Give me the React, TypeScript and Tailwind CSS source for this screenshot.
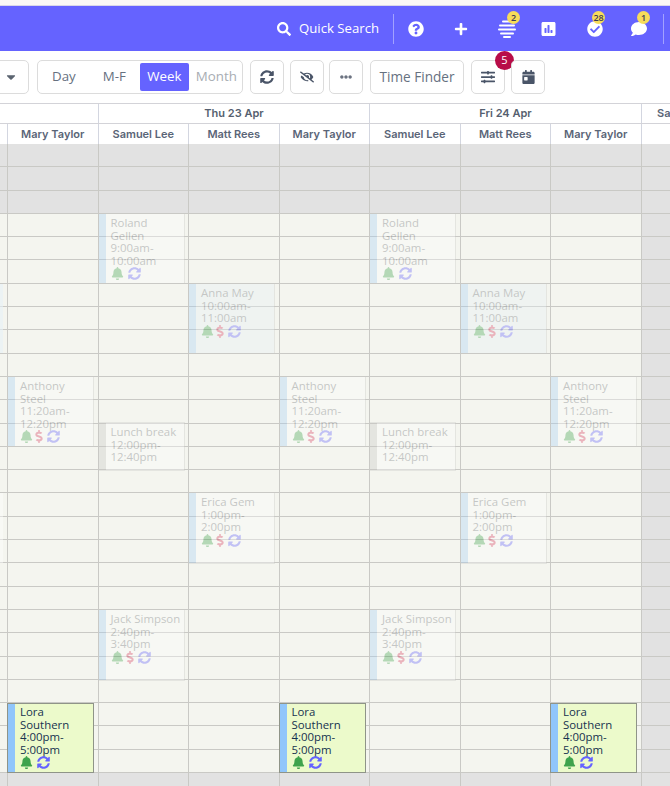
import { FaBell, FaCalendarDay, FaCaretDown, FaCheckCircle, FaComment, FaDollarSign, FaEllipsisH, FaEyeSlash, FaPlus, FaPoll, FaQuestionCircle, FaSearch, FaSlidersH, FaSyncAlt } from "react-icons/fa";

type Ev = {
  name: string[];
  time: string[];
  top: number;
  height: number;
  dollar?: boolean;
  bar?: string;
  tint?: string;
  noIcons?: boolean;
  active?: boolean;
};

const roland: Ev = { name: ["Roland", "Gellen"], time: ["9:00am-", "10:00am"], top: 70, height: 69 };
const anna: Ev = { name: ["Anna May"], time: ["10:00am-", "11:00am"], top: 140, height: 69, dollar: true, tint: "bg-[#e6f1f7]" };
const anthony: Ev = { name: ["Anthony", "Steel"], time: ["11:20am-", "12:20pm"], top: 233, height: 69, dollar: true };
const lunch: Ev = { name: ["Lunch break"], time: ["12:00pm-", "12:40pm"], top: 279, height: 47, noIcons: true, bar: "bg-[#c9cac6]" };
const erica: Ev = { name: ["Erica Gem"], time: ["1:00pm-", "2:00pm"], top: 349, height: 70, dollar: true };
const jack: Ev = { name: ["Jack Simpson"], time: ["2:40pm-", "3:40pm"], top: 466, height: 70, dollar: true };
const lora: Ev = { name: ["Lora", "Southern"], time: ["4:00pm-", "5:00pm"], top: 559, height: 70, active: true };

const columns = [
  { name: "Mary Taylor", events: [anthony, lora] },
  { name: "Samuel Lee", events: [roland, lunch, jack] },
  { name: "Matt Rees", events: [anna, erica] },
  { name: "Mary Taylor", events: [anthony, lora] },
  { name: "Samuel Lee", events: [roland, lunch, jack] },
  { name: "Matt Rees", events: [anna, erica] },
  { name: "Mary Taylor", events: [anthony, lora] },
];

const rows = Array.from({ length: 28 }, (_, i) => i);

function Rows({ closed }: { closed?: boolean }) {
  return (
    <>
      {rows.map((i) => (
        <div
          key={i}
          className={`h-[23.3px] border-b border-[#c9c9c5] ${closed || i < 3 || i > 26 ? "bg-[#e2e2e2]" : "bg-[#f4f5ef]"}`}
        />
      ))}
    </>
  );
}

function EventCard({ ev }: { ev: Ev }) {
  return (
    <div
      className={`absolute flex overflow-hidden text-[11.4px] leading-[12.6px] ${
        ev.active
          ? "left-[-1px] w-[87px] border border-[#8f9488] bg-[#ecfacb] text-[#16324f]"
          : `left-0 w-[85px] opacity-35 ${ev.tint ?? "bg-white"} text-[#6e7278] shadow-[0_0_0_1px_#c9cac6]`
      }`}
      style={{ top: ev.top, height: ev.height }}
    >
      <div className={`w-[7px] shrink-0 ${ev.bar ?? (ev.active ? "bg-[#90c6fb]" : "bg-[#a9d1f5]")}`} />
      <div className={`pl-[5px] ${ev.active ? "pt-[2px]" : "pt-[3px]"}`}>
        {[...ev.name, ...ev.time].map((line, i) => (
          <div key={i} className="whitespace-nowrap">{line}</div>
        ))}
        {!ev.noIcons && (
          <div className="flex items-center gap-[2px]">
            <FaBell className="h-[13px] w-[13px] text-[#3fa34d]" />
            {ev.dollar && <FaDollarSign className="h-[13px] w-[8px] text-[#d93a5e]" />}
            <FaSyncAlt className="ml-0.5 h-[13px] w-[13px] text-[#6563ff]" />
          </div>
        )}
      </div>
    </div>
  );
}

function ToolButton({ children, width = "w-[34px]" }: { children: React.ReactNode; width?: string }) {
  return (
    <div className={`relative flex h-[34px] items-center justify-center rounded-[5px] border border-[#dcdcdc] bg-white text-[#4a5568] ${width}`}>
      {children}
    </div>
  );
}

function Badge({ children, className }: { children: React.ReactNode; className: string }) {
  return (
    <span className={`absolute flex h-[13px] min-w-[13px] items-center justify-center rounded-full bg-[#f7dc5b] text-[9px] font-semibold text-[#3b3b55] ${className}`}>
      {children}
    </span>
  );
}

export default function App() {
  return (
    <div className="h-[786px] w-[670px] overflow-hidden bg-white font-['Open_Sans',sans-serif]">
      <div className="h-[6px] border-b border-[#d9d8e8] bg-[#faf9f6]" />

      <header className="flex h-[45px] items-center justify-end bg-[#6563ff] pl-[277px] text-white">
        <FaSearch className="h-[14px] w-[14px]" />
        <span className="ml-2 text-[13.2px]">Quick Search</span>
        <div className="ml-[14px] h-[30px] w-px bg-white/40" />
        <div className="relative flex-1 self-stretch">
          <FaQuestionCircle className="absolute left-[14px] top-[15px] h-[16px] w-[16px]" />
          <FaPlus className="absolute left-[60px] top-[16px] h-[14px] w-[14px]" />
          <svg className="absolute left-[104px] top-[14px] h-[18px] w-[18px]" viewBox="0 0 18 18" fill="currentColor">
            <rect x="4" y="0.5" width="10" height="2" rx="1" />
            <rect x="1" y="4.5" width="16" height="2" rx="1" />
            <rect x="0" y="8.5" width="18" height="2" rx="1" />
            <rect x="2" y="12.5" width="14" height="2" rx="1" />
            <rect x="5" y="16" width="8" height="2" rx="1" />
          </svg>
          <Badge className="left-[113px] top-[5px]">2</Badge>
          <FaPoll className="absolute left-[147px] top-[15px] h-[16px] w-[15px]" />
          <FaCheckCircle className="absolute left-[193px] top-[15px] h-[16px] w-[16px]" />
          <Badge className="left-[198px] top-[5px] text-[8px]">28</Badge>
          <FaComment className="absolute left-[237px] top-[15px] h-[16px] w-[16px]" />
          <Badge className="left-[243px] top-[5px]">1</Badge>
          <div className="absolute left-[269px] top-[8px] h-[30px] w-px bg-white/40" />
        </div>
      </header>

      <div className="flex h-[52px] items-center bg-white">
        <div className="ml-[-20px] flex h-[34px] w-[49px] items-center justify-end rounded-[5px] border border-[#dcdcdc] pr-[10px] text-[#5b6470]">
          <FaCaretDown className="h-[14px] w-[14px]" />
        </div>
        <div className="ml-[8px] flex h-[34px] w-[206px] items-center rounded-[5px] border border-[#dcdcdc] pl-[14px] text-[13.3px] text-[#66717f]">
          <span>Day</span>
          <span className="ml-[27px]">M-F</span>
          <span className="ml-[14px] flex h-[28px] w-[49px] items-center justify-center rounded-[2px] bg-[#6563ff] text-white">Week</span>
          <span className="ml-[7px] text-[#a8adb3]">Month</span>
        </div>
        <div className="ml-[7px]"><ToolButton><FaSyncAlt className="h-[14px] w-[14px]" /></ToolButton></div>
        <div className="ml-[6px]"><ToolButton><FaEyeSlash className="h-[14px] w-[14px]" /></ToolButton></div>
        <div className="ml-[5px]"><ToolButton><FaEllipsisH className="h-[12px] w-[12px] text-[#6b7280]" /></ToolButton></div>
        <div className="ml-[7px]"><ToolButton width="w-[94px]"><span className="text-[13.6px] text-[#66717f]">Time Finder</span></ToolButton></div>
        <div className="ml-[7px]">
          <ToolButton>
            <FaSlidersH className="h-[14px] w-[14px]" />
            <span className="absolute left-[23px] top-[-10px] flex h-[19px] w-[19px] items-center justify-center rounded-full bg-[#b80d48] text-[11px] text-white">5</span>
          </ToolButton>
        </div>
        <div className="ml-[6px]"><ToolButton><FaCalendarDay className="h-[14px] w-[13px]" /></ToolButton></div>
      </div>

      <div className="font-['Inter',sans-serif] text-[11px] font-semibold text-[#5a6577]">
        <div className="flex h-[21px] border-y border-[#d3d3d8]">
          <div className="w-[99px] shrink-0 border-r border-[#d3d6e0]" />
          <div className="flex w-[271px] shrink-0 items-center justify-center border-r border-[#d3d6e0] text-[#555f6f]">Thu 23 Apr</div>
          <div className="flex w-[272px] shrink-0 items-center justify-center border-r border-[#d3d6e0] text-[#555f6f]">Fri 24 Apr</div>
          <div className="shrink-0 pl-[15px] leading-[19px]">Sat</div>
        </div>
        <div className="flex h-[20px]">
          <div className="w-[8px] border-r border-[#d3d6e0]" />
          {columns.map((c, i) => (
            <div key={i} className="flex w-[90.5px] items-center justify-center border-r border-[#d3d6e0]">{c.name}</div>
          ))}
        </div>
      </div>

      <div className="flex">
        <div className="relative w-[8px] border-r border-[#c9c9c5]">
          <Rows />
          <div className="absolute left-0 top-[140px] h-[69px] w-[3px] bg-[#e6f1f7]/60" />
          <div className="absolute left-0 top-[349px] h-[70px] w-[3px] bg-white/40" />
        </div>
        {columns.map((c, i) => (
          <div key={i} className="relative w-[90.5px] border-r border-[#c9c9c5]">
            <Rows />
            {c.events.map((ev, j) => <EventCard key={j} ev={ev} />)}
          </div>
        ))}
        <div className="flex-1"><Rows closed /></div>
      </div>
    </div>
  );
}
